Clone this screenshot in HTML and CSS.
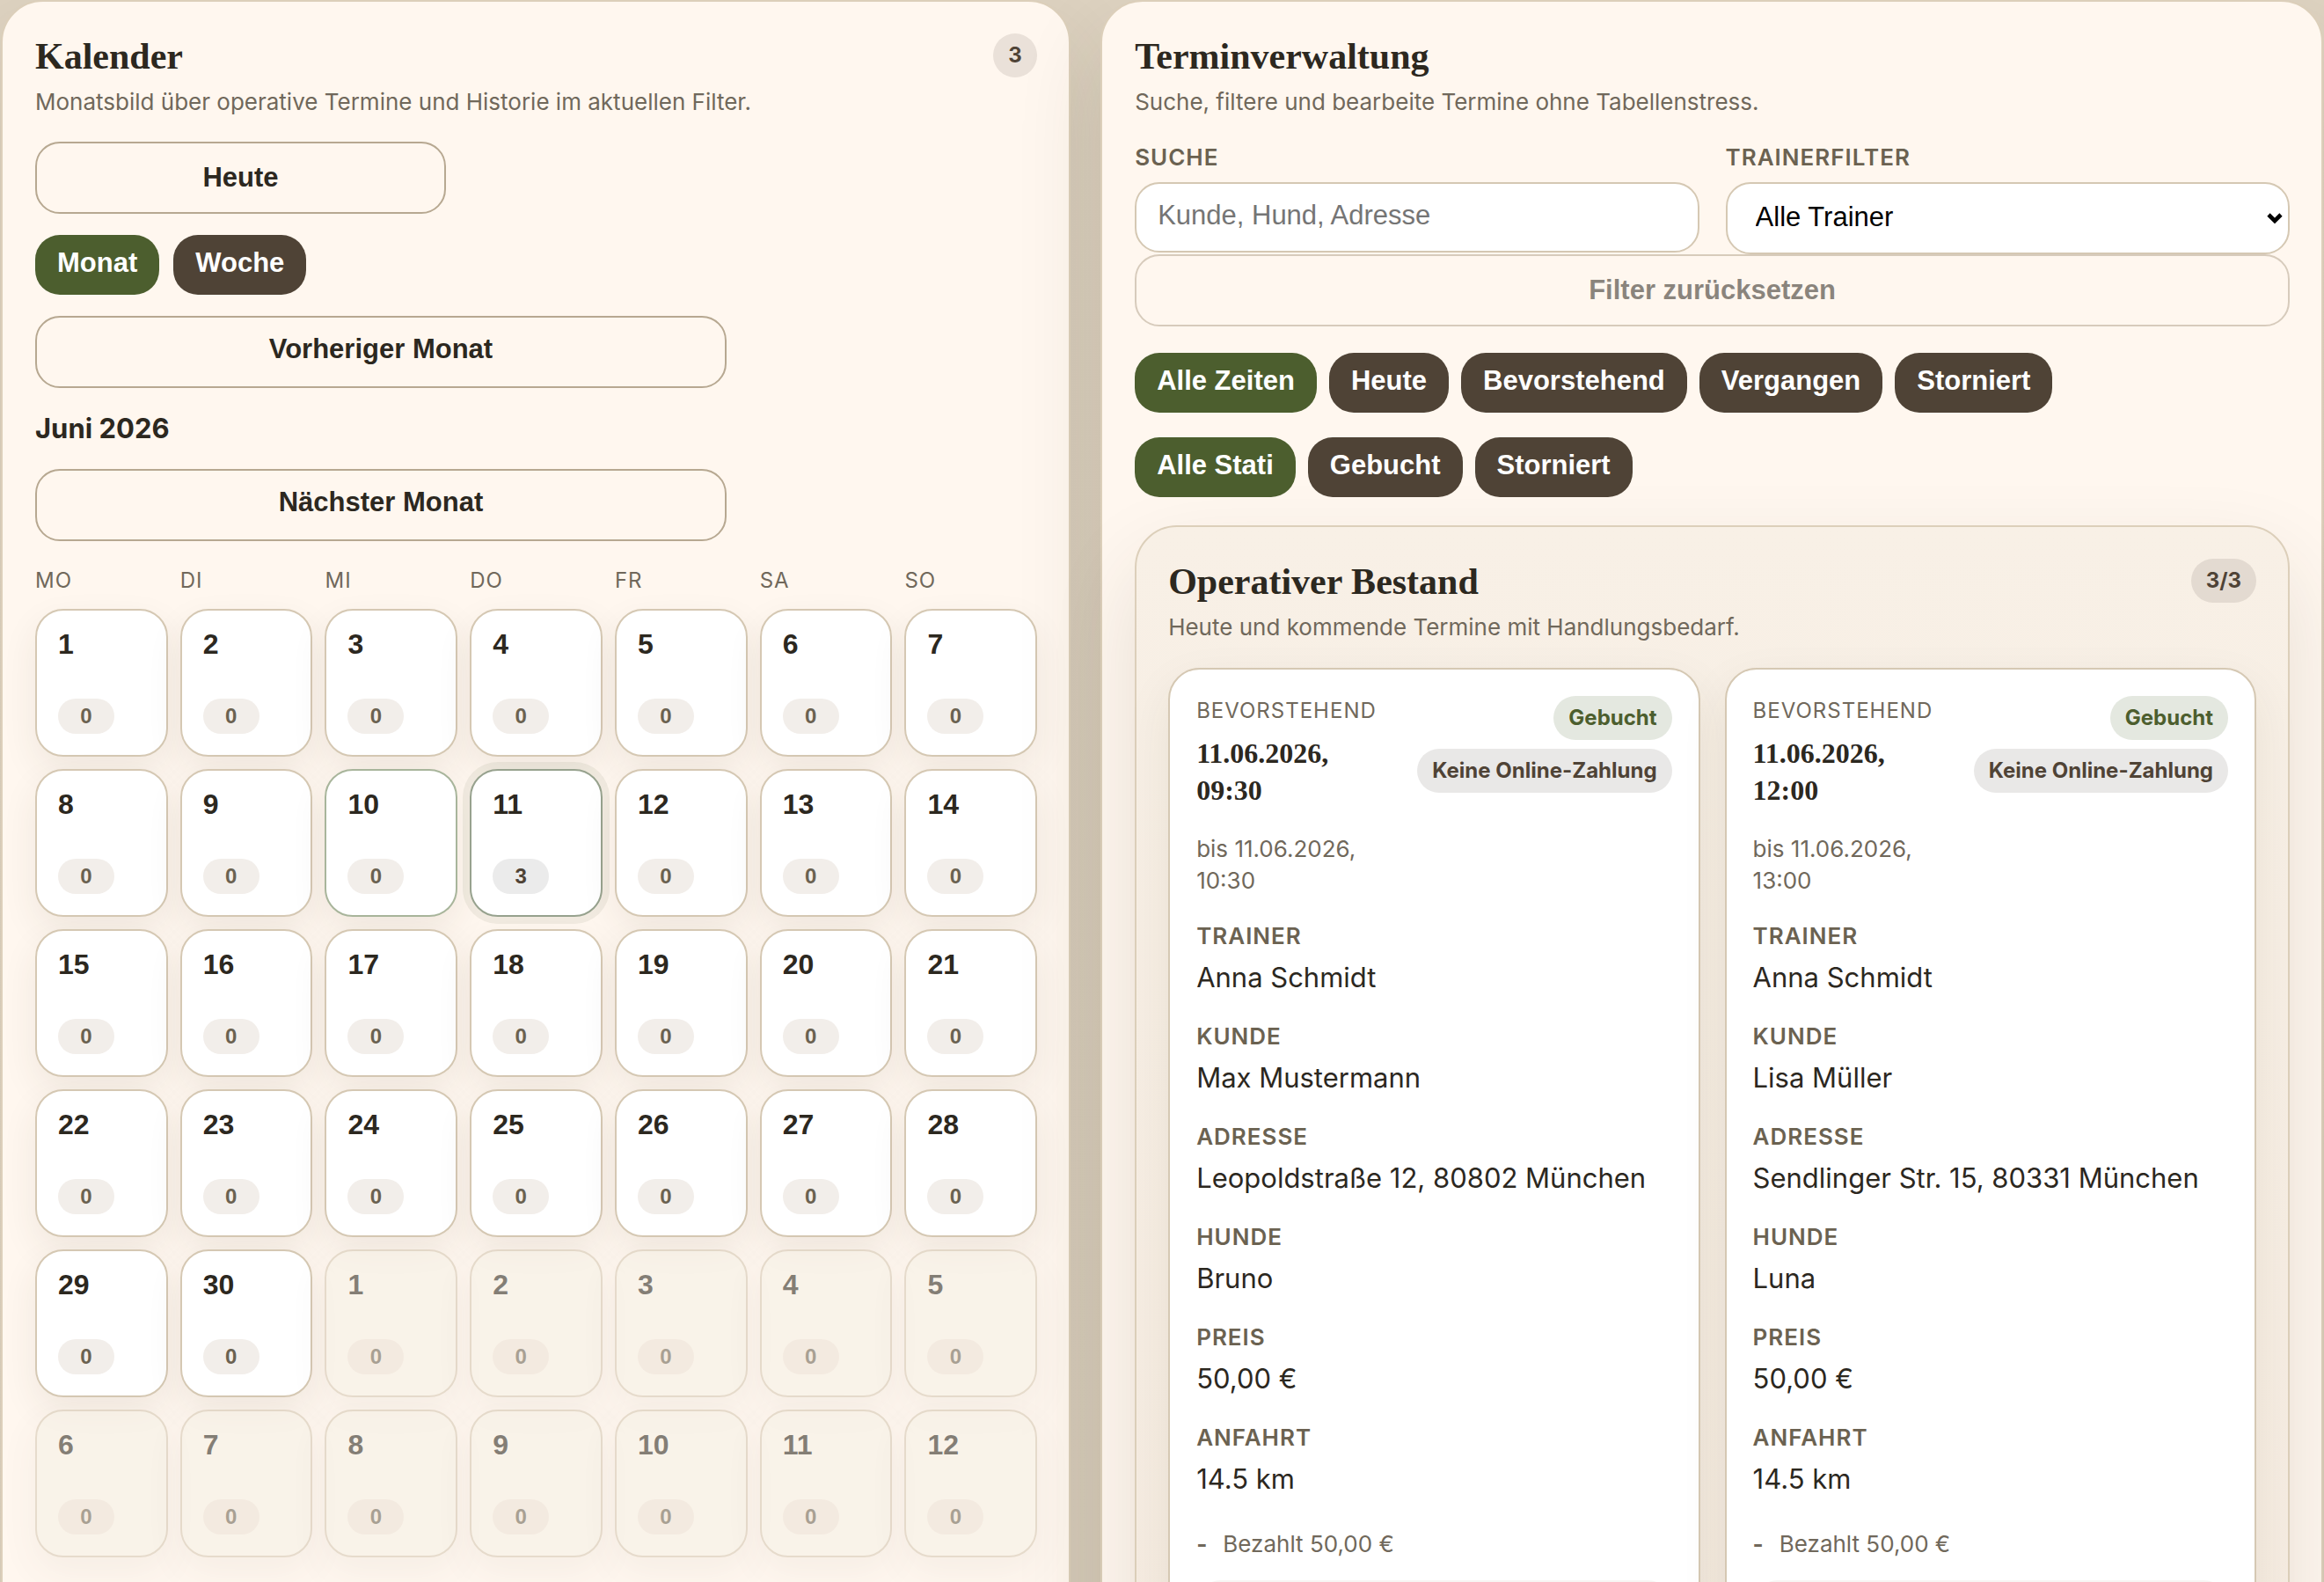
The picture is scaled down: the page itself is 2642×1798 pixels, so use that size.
FILE: index.html
```html
<!DOCTYPE html>
<html lang="de">
<head>
    <meta charset="UTF-8">
    <meta name="viewport" content="width=device-width, initial-scale=1.0">
    <title>Terminverwaltung</title>
    <link rel="stylesheet" href="styles.css">
</head>
<body>
    <main class="layout">
        <section class="panel">
            <header class="panel-head">
                <div>
                    <h2>Kalender</h2>
                    <p class="subtitle">Monatsbild über operative Termine und Historie im aktuellen Filter.</p>
                </div>
                <span class="badge">3</span>
            </header>

            <div class="calendar-tools">
                <button type="button" class="btn btn-today">Heute</button>
                <div class="chips">
                    <button type="button" class="chip active">Monat</button>
                    <button type="button" class="chip">Woche</button>
                </div>
                <button type="button" class="btn btn-month">Vorheriger Monat</button>
                <strong class="month-name">Juni 2026</strong>
                <button type="button" class="btn btn-month">Nächster Monat</button>
            </div>

            <div class="weekdays">
                <span>MO</span>
                <span>DI</span>
                <span>MI</span>
                <span>DO</span>
                <span>FR</span>
                <span>SA</span>
                <span>SO</span>
            </div>
            <div class="days" id="days"></div>
        </section>

        <section class="panel">
            <header class="panel-head">
                <div>
                    <h2>Terminverwaltung</h2>
                    <p class="subtitle">Suche, filtere und bearbeite Termine ohne Tabellenstress.</p>
                </div>
            </header>

            <form class="filters">
                <div class="field">
                    <label for="search">SUCHE</label>
                    <input type="text" id="search" placeholder="Kunde, Hund, Adresse">
                </div>
                <div class="field">
                    <label for="trainer">TRAINERFILTER</label>
                    <div class="select-wrap">
                        <select id="trainer">
                            <option>Alle Trainer</option>
                        </select>
                        <svg class="select-arrow" viewBox="0 0 20 14" aria-hidden="true"><path d="M3 3l7 7 7-7" fill="none" stroke="#000" stroke-width="4.6"/></svg>
                    </div>
                </div>
                <button type="reset" class="btn btn-reset" disabled>Filter zurücksetzen</button>
            </form>

            <div class="chips chips-time">
                <button type="button" class="chip active">Alle Zeiten</button>
                <button type="button" class="chip">Heute</button>
                <button type="button" class="chip">Bevorstehend</button>
                <button type="button" class="chip">Vergangen</button>
                <button type="button" class="chip">Storniert</button>
            </div>
            <div class="chips chips-status">
                <button type="button" class="chip active">Alle Stati</button>
                <button type="button" class="chip">Gebucht</button>
                <button type="button" class="chip">Storniert</button>
            </div>

            <section class="group">
                <header class="panel-head">
                    <div>
                        <h2>Operativer Bestand</h2>
                        <p class="subtitle">Heute und kommende Termine mit Handlungsbedarf.</p>
                    </div>
                    <span class="badge">3/3</span>
                </header>

                <div class="cards">
                    <article class="card">
                        <div class="card-head">
                            <div>
                                <p class="eyebrow">BEVORSTEHEND</p>
                                <h3>11.06.2026, 09:30</h3>
                                <p class="until">bis 11.06.2026, 10:30</p>
                            </div>
                            <div class="badges">
                                <span class="badge badge-booked">Gebucht</span>
                                <span class="badge badge-neutral">Keine Online-Zahlung</span>
                            </div>
                        </div>
                        <dl>
                            <dt>TRAINER</dt>
                            <dd>Anna Schmidt</dd>
                            <dt>KUNDE</dt>
                            <dd>Max Mustermann</dd>
                            <dt>ADRESSE</dt>
                            <dd>Leopoldstraße 12, 80802 München</dd>
                            <dt>HUNDE</dt>
                            <dd>Bruno</dd>
                            <dt>PREIS</dt>
                            <dd>50,00 €</dd>
                            <dt>ANFAHRT</dt>
                            <dd>14.5 km</dd>
                        </dl>
                        <p class="payment"><b>-</b><span>Bezahlt 50,00 €</span></p>
                        <div class="note"></div>
                    </article>

                    <article class="card">
                        <div class="card-head">
                            <div>
                                <p class="eyebrow">BEVORSTEHEND</p>
                                <h3>11.06.2026, 12:00</h3>
                                <p class="until">bis 11.06.2026, 13:00</p>
                            </div>
                            <div class="badges">
                                <span class="badge badge-booked">Gebucht</span>
                                <span class="badge badge-neutral">Keine Online-Zahlung</span>
                            </div>
                        </div>
                        <dl>
                            <dt>TRAINER</dt>
                            <dd>Anna Schmidt</dd>
                            <dt>KUNDE</dt>
                            <dd>Lisa Müller</dd>
                            <dt>ADRESSE</dt>
                            <dd>Sendlinger Str. 15, 80331 München</dd>
                            <dt>HUNDE</dt>
                            <dd>Luna</dd>
                            <dt>PREIS</dt>
                            <dd>50,00 €</dd>
                            <dt>ANFAHRT</dt>
                            <dd>14.5 km</dd>
                        </dl>
                        <p class="payment"><b>-</b><span>Bezahlt 50,00 €</span></p>
                        <div class="note"></div>
                    </article>
                </div>
            </section>
        </section>
    </main>
    <script src="script.js"></script>
</body>
</html>
```
FILE: styles.css
```css
* {
    box-sizing: border-box;
}

body {
    margin: 0;
    background: linear-gradient(180deg, #ded3c1 0%, #dfd4c2 100%);
    color: #2c281f;
    font-family: 'Inter', sans-serif;
    font-size: 30px;
}

h2, h3, p, dl, dd {
    margin: 0;
}

button, input, select {
    font-family: 'Liberation Sans', Arial, sans-serif;
    font-size: 31px;
    color: #2c281f;
}

.layout {
    display: grid;
    grid-template-columns: 7fr 8fr;
    gap: 34px;
    height: 100vh;
    padding: 0 1px;
    overflow: hidden;
}

.panel {
    min-width: 0;
    padding: 36px 36px 36px 37px;
    border: 2px solid #dccfba;
    border-radius: 48px;
    background: #fff7ef;
    box-shadow: 0 44px 100px rgba(60, 50, 35, 0.12);
}

.panel-head {
    display: flex;
    justify-content: space-between;
    align-items: flex-start;
    gap: 24px;
}

h2 {
    font-family: 'Liberation Serif', serif;
    font-size: 42px;
    line-height: 52px;
    font-weight: 700;
}

.subtitle {
    margin-top: 8px;
    font-size: 26px;
    line-height: 36px;
    color: #70685b;
}

.badge {
    min-width: 50px;
    padding: 0 17px;
    border-radius: 25px;
    background: rgba(80, 67, 54, 0.12);
    color: #4f4336;
    font-size: 24px;
    line-height: 50px;
    font-weight: 700;
    white-space: nowrap;
}

/* Buttons */
.btn {
    height: 82px;
    border: 2px solid #b7a891;
    border-radius: 28px;
    background: transparent;
    font-weight: 700;
    cursor: pointer;
}

.btn:disabled {
    opacity: 0.55;
    color: #2c281f;
}

.chips {
    display: flex;
    flex-wrap: wrap;
    gap: 14px;
}

.chip {
    height: 68px;
    padding: 0 25px 4px;
    border: none;
    border-radius: 28px;
    background: #4f4336;
    color: #fff;
    font-weight: 700;
    cursor: pointer;
}

.chip.active {
    background: #4c5e2e;
}

/* Kalender */
.calendar-tools {
    display: flex;
    flex-direction: column;
    align-items: flex-start;
    gap: 24px;
    margin-top: 27px;
}

.calendar-tools .chips {
    gap: 16px;
}

.btn-today {
    width: 41%;
}

.btn-month {
    width: 69%;
    padding-bottom: 8px;
}

.month-name {
    font-size: 31px;
    line-height: 44px;
}

.weekdays, .days {
    display: grid;
    grid-template-columns: repeat(7, 1fr);
    gap: 14px;
}

.weekdays {
    margin: 28px 0 15px;
    font-size: 24px;
    line-height: 34px;
    letter-spacing: 1px;
    color: #70685b;
}

.day {
    display: flex;
    flex-direction: column;
    justify-content: space-between;
    align-items: flex-start;
    height: 168px;
    padding: 20px 24px 24px;
    border: 2px solid #d5c8b3;
    border-radius: 32px;
    background: #fff;
    box-shadow: 0 16px 40px rgba(60, 50, 35, 0.08);
    font-size: 32px;
    line-height: 36px;
    font-weight: 700;
    cursor: pointer;
}

.day-count {
    width: 64px;
    border-radius: 20px;
    background: #f2eeea;
    color: #6b6251;
    font-size: 24px;
    line-height: 40px;
    text-align: center;
}

.day.outside {
    background: #f6f1e6;
    opacity: 0.58;
}

.day.outside .day-count {
    background: #ece2d6;
}

.day.today {
    border-color: #a8b59b;
}

.day.selected {
    border-color: #97a28e;
    box-shadow: 0 0 0 8px rgba(76, 94, 46, 0.08);
}

.day.selected .day-count {
    background: #ebebeb;
    color: #4f4336;
}

/* Filter */
.filters {
    display: grid;
    grid-template-columns: 1fr 1fr;
    column-gap: 30px;
    margin-top: 27px;
}

.field label {
    display: block;
    margin-bottom: 10px;
    color: #6b6251;
    font-size: 26px;
    line-height: 36px;
    font-weight: 600;
    letter-spacing: 1px;
}

.field input, .field select {
    display: block;
    width: 100%;
    height: 80px;
    padding: 0 24px 4px;
    border: 2px solid #d5c8b3;
    border-radius: 28px;
    background: #fff;
}

.field input::placeholder {
    color: #757575;
}

.select-wrap {
    position: relative;
}

.field select {
    height: 82px;
    padding: 0 32px 4px;
    appearance: none;
    color: #000;
}

.select-arrow {
    position: absolute;
    right: 7px;
    top: 34px;
    width: 20px;
    height: 14px;
    pointer-events: none;
}

.btn-reset {
    grid-column: 1 / -1;
}

.chips-time {
    margin-top: 30px;
}

.chips-status {
    margin-top: 28px;
}

/* Termine */
.group {
    margin-top: 32px;
    padding: 36px;
    border: 2px solid #dccfba;
    border-radius: 48px;
    background: linear-gradient(180deg, #f8f0e6, #f5ebe0);
    box-shadow: 0 44px 100px rgba(60, 50, 35, 0.12);
}

.cards {
    display: grid;
    grid-template-columns: 1fr 1fr;
    gap: 28px;
    margin-top: 28px;
}

.card {
    min-width: 0;
    padding: 30px;
    border: 2px solid #d5c8b3;
    border-radius: 36px;
    background: #fff;
    box-shadow: 0 20px 56px rgba(60, 50, 35, 0.07);
}

.card-head {
    display: flex;
    justify-content: space-between;
    align-items: flex-start;
    gap: 24px;
}

.eyebrow {
    color: #70685b;
    font-size: 24px;
    line-height: 34px;
    letter-spacing: 1px;
}

h3 {
    margin-top: 10px;
    font-family: 'Liberation Serif', serif;
    font-size: 32px;
    line-height: 42px;
    font-weight: 700;
}

.until {
    margin-top: 28px;
    color: #70685b;
    font-size: 26px;
    line-height: 36px;
}

.badges {
    display: flex;
    flex-direction: column;
    align-items: flex-end;
    flex-shrink: 0;
    gap: 10px;
}

.badge-booked {
    background: #e4e8e0;
    color: #4c5e2e;
}

.badge-neutral {
    background: #e9e8e7;
}

dt {
    margin-top: 26px;
    color: #6b6251;
    font-size: 26px;
    line-height: 38px;
    font-weight: 600;
    letter-spacing: 1px;
}

dd {
    margin-top: 6px;
    font-size: 31px;
    line-height: 44px;
}

.payment {
    display: flex;
    gap: 18px;
    margin-top: 34px;
    color: #70685b;
    font-size: 26px;
    line-height: 36px;
}

.note {
    height: 120px;
    margin-top: 23px;
    border-radius: 28px;
    background: #f7f5f3;
}
```
FILE: script.js
```js
const days = document.getElementById('days');

// 30 Tage im Juni, danach die ersten 12 Tage im Juli
for (let i = 1; i <= 42; i++) {
    const outside = i > 30;
    const day = document.createElement('button');
    day.type = 'button';
    day.className = 'day';
    if (outside) day.classList.add('outside');
    if (i === 10) day.classList.add('today');
    if (i === 11) day.classList.add('selected');
    day.innerHTML = `<span>${outside ? i - 30 : i}</span><span class="day-count">${i === 11 ? 3 : 0}</span>`;
    days.appendChild(day);
}
```
